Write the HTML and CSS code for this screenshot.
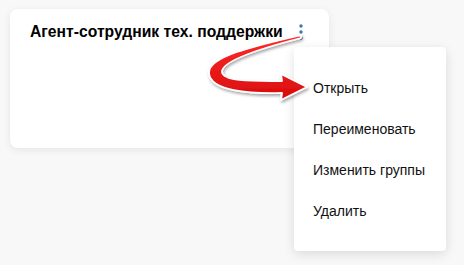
FILE: index.html
```html
<!DOCTYPE html>
<html lang="ru">
<head>
    <meta charset="UTF-8">
    <meta name="viewport" content="width=device-width, initial-scale=1.0">
    <title>Агент-сотрудник</title>
    <link rel="stylesheet" href="styles.css">
</head>
<body>
    <div class="card">
        <div class="card-head">
            <div class="card-title">Агент-сотрудник тех. поддержки</div>
            <svg class="dots" width="4" height="16" viewBox="0 0 4 16">
                <circle cx="2" cy="2" r="1.7"/>
                <circle cx="2" cy="8" r="1.7"/>
                <circle cx="2" cy="14" r="1.7"/>
            </svg>
        </div>
    </div>

    <ul class="menu">
        <li>Открыть</li>
        <li>Переименовать</li>
        <li>Изменить группы</li>
        <li>Удалить</li>
    </ul>

    <svg class="pointer" width="464" height="265" viewBox="0 0 464 265">
        <defs>
            <linearGradient id="red" x1="0" y1="0" x2="0" y2="1">
                <stop offset="0" stop-color="#ff2a2a"/>
                <stop offset="1" stop-color="#d80c0c"/>
            </linearGradient>
            <filter id="sh" x="-20%" y="-20%" width="140%" height="150%">
                <feDropShadow dx="1" dy="2" stdDeviation="1.5" flood-color="#000" flood-opacity="0.35"/>
            </filter>
        </defs>
        <path d="M301,35 C258,45 208,56 209,73 C210,91 250,94 282,93 L281,100 L307,87 L281,74 L282,81 C255,81 223,82 222,72 C221,61 262,48 301,38 Z"
              fill="url(#red)" stroke="#fff" stroke-width="1.8" stroke-linejoin="round" filter="url(#sh)"/>
    </svg>
</body>
</html>
```

FILE: styles.css
```css
body {
    margin: 0;
    padding: 9px 10px;
    background-color: #f8f8f8;
    font-family: "Liberation Sans", Arial, sans-serif;
    color: #111;
}
.card {
    width: 319px;
    height: 139px;
    box-sizing: border-box;
    padding: 14px 26px 0 20px;
    background-color: #fff;
    border-radius: 8px;
    box-shadow: 0 2px 8px rgba(0, 0, 0, 0.08);
}
.card-head {
    display: flex;
    justify-content: space-between;
    align-items: flex-start;
}
.card-title {
    font-size: 15.7px;
    font-weight: bold;
    line-height: 18px;
    color: #000;
}
.dots {
    margin-top: 1px;
    fill: #3a78ad;
}
.menu {
    position: absolute;
    left: 294px;
    top: 47px;
    width: 152px;
    height: 204px;
    box-sizing: border-box;
    margin: 0;
    padding: 21px 0 0 19px;
    list-style: none;
    background-color: #fff;
    border-radius: 4px;
    box-shadow: 0 3px 12px rgba(0, 0, 0, 0.12);
}
.menu li {
    font-size: 14px;
    line-height: 41px;
    color: #111;
}
.pointer {
    position: absolute;
    left: 0;
    top: 0;
    pointer-events: none;
}
```
